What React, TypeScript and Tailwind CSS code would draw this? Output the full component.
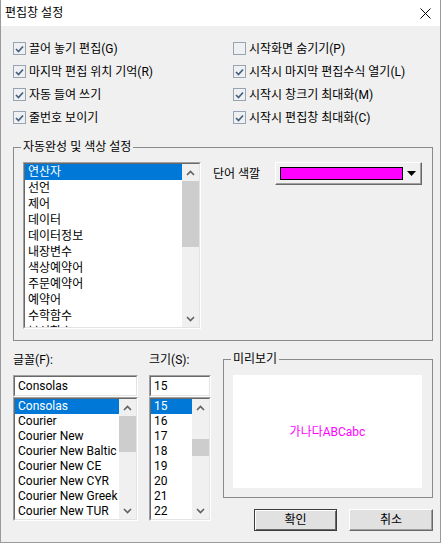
import React from "react";

const FONT = { fontFamily: 'Roboto, "Noto Sans CJK KR", sans-serif' };

const options: [string, boolean][] = [
  ["끌어 놓기 편집(G)", true],
  ["시작화면 숨기기(P)", false],
  ["마지막 편집 위치 기억(R)", true],
  ["시작시 마지막 편집수식 열기(L)", true],
  ["자동 들여 쓰기", true],
  ["시작시 창크기 최대화(M)", true],
  ["줄번호 보이기", true],
  ["시작시 편집창 최대화(C)", true],
];

const categories = [
  "연산자",
  "선언",
  "제어",
  "데이터",
  "데이터정보",
  "내장변수",
  "색상예약어",
  "주문예약어",
  "예약어",
  "수학함수",
  "분석함수",
];

const fonts = [
  "Consolas",
  "Courier",
  "Courier New",
  "Courier New Baltic",
  "Courier New CE",
  "Courier New CYR",
  "Courier New Greek",
  "Courier New TUR",
];

const sizes = ["15", "16", "17", "18", "19", "20", "21", "22"];

const CheckBox = ({ checked }: { checked: boolean }) => (
  <span className="w-[13px] h-[13px] border border-[#98a4b2] bg-[#eef0f3] flex items-center justify-center shrink-0">
    {checked && (
      <svg width="9" height="8" viewBox="0 0 9 8">
        <polyline points="1,4 3.5,6.5 8,1.5" fill="none" stroke="#46607f" strokeWidth="1.7" />
      </svg>
    )}
  </span>
);

const Chevron = ({ up }: { up?: boolean }) => (
  <svg width="9" height="6" viewBox="0 0 9 6">
    <polyline
      points={up ? "1,5 4.5,1.5 8,5" : "1,1 4.5,4.5 8,1"}
      fill="none"
      stroke="#606060"
      strokeWidth="1.6"
    />
  </svg>
);

const ScrollBar = ({ thumb }: { thumb: string }) => (
  <div className="w-[17px] h-full bg-[#f0f0f0] flex flex-col shrink-0">
    <div className="h-[17px] flex items-center justify-center shrink-0">
      <Chevron up />
    </div>
    <div className="flex-1">
      <div className={`bg-[#cdcdcd] ${thumb}`} />
    </div>
    <div className="h-[17px] flex items-center justify-center shrink-0">
      <Chevron />
    </div>
  </div>
);

// windows style sunken frame
const Sunken = ({ className, children }: { className: string; children: React.ReactNode }) => (
  <div className={`border border-t-[#a0a0a0] border-l-[#a0a0a0] border-r-white border-b-white ${className}`}>
    <div className="h-full border border-t-[#696969] border-l-[#696969] border-r-[#e3e3e3] border-b-[#e3e3e3] bg-white flex">
      {children}
    </div>
  </div>
);

const ListBox = ({
  items,
  className,
  rowClass,
  thumb,
}: {
  items: string[];
  className: string;
  rowClass: string;
  thumb: string;
}) => (
  <Sunken className={className}>
    <div className="flex-1 overflow-hidden">
      {items.map((t, i) => (
        <div
          key={t}
          className={`${rowClass} pl-[3px] whitespace-nowrap overflow-hidden ${
            i === 0 ? "bg-[#0078d7] text-white" : "text-black"
          }`}
        >
          {t}
        </div>
      ))}
    </div>
    <ScrollBar thumb={thumb} />
  </Sunken>
);

const Button = ({ label, primary }: { label: string; primary?: boolean }) => (
  <button
    className={`h-[22px] text-[12px] leading-[16px] bg-[#e1e1e1] ${
      primary
        ? "w-[83px] border border-[#3c3c3c] shadow-[inset_1px_1px_0_#ffffff,inset_-1px_-1px_0_#696969]"
        : "w-[84px] border border-t-white border-l-white border-r-[#696969] border-b-[#696969] shadow-[inset_-1px_-1px_0_#a0a0a0]"
    }`}
  >
    {label}
  </button>
);

export default function App() {
  return (
    <div
      className="w-[441px] h-[543px] bg-[#f0f0f0] border-x border-b border-[#9a9a9a] flex flex-col text-[12px] text-black"
      style={FONT}
    >
      <div className="h-[26px] bg-white flex items-center justify-between pl-[4px] pr-[9px] shrink-0">
        <span className="leading-[16px]">편집창 설정</span>
        <svg width="11" height="11" viewBox="0 0 11 11">
          <path d="M0.5 0.5 L10.5 10.5 M10.5 0.5 L0.5 10.5" stroke="#000" strokeWidth="1" />
        </svg>
      </div>

      <div className="grid grid-cols-[220px_200px] pl-[12px] pt-[11px]">
        {options.map(([label, checked]) => (
          <label key={label} className="h-[23px] flex items-center gap-[3px] leading-[16px]">
            <CheckBox checked={checked} />
            <span>{label}</span>
          </label>
        ))}
      </div>

      <fieldset className="ml-[12px] mt-[10px] w-[420px] border border-[#8a8a8a] pl-[9px] pt-[7px] pb-[11px] flex">
        <legend className="ml-[-2px] px-[2px] leading-[16px]">자동완성 및 색상 설정</legend>
        <ListBox
          items={categories}
          className="w-[178px] h-[167px]"
          rowClass="h-[16px] leading-[16px]"
          thumb="h-[66px]"
        />
        <div className="ml-[12px] h-[23px] flex items-center leading-[16px] w-[62px]">단어 색깔</div>
        <div className="w-[147px] h-[23px] bg-[#f0f0f0] border border-t-white border-l-white border-r-[#696969] border-b-[#696969] shadow-[inset_-1px_-1px_0_#a0a0a0] flex items-center pl-[4px] pr-[5px] gap-[4px]">
          <div className="flex-1 h-[13px] bg-[#ff00ff] border border-black" />
          <svg width="9" height="5" viewBox="0 0 9 5">
            <polygon points="0,0 9,0 4.5,5" fill="#000" />
          </svg>
        </div>
      </fieldset>

      <div className="flex pl-[12px] mt-[10px]">
        <div className="w-[125px] flex flex-col">
          <div className="h-[16px] leading-[16px] mt-[1px] mb-[7px]">글꼴(F):</div>
          <Sunken className="h-[22px]">
            <div className="pl-[3px] leading-[18px]">Consolas</div>
          </Sunken>
          <ListBox
            items={fonts}
            className="h-[124px]"
            rowClass="h-[15px] leading-[15px]"
            thumb="h-[36px]"
          />
        </div>

        <div className="w-[62px] ml-[11px] flex flex-col">
          <div className="h-[16px] leading-[16px] mt-[1px] mb-[7px]">크기(S):</div>
          <Sunken className="h-[22px]">
            <div className="pl-[3px] leading-[18px]">15</div>
          </Sunken>
          <ListBox
            items={sizes}
            className="h-[124px]"
            rowClass="h-[15px] leading-[15px]"
            thumb="mt-[23px] h-[17px]"
          />
        </div>

        <div className="w-[210px] ml-[12px] flex flex-col">
          <fieldset className="border border-[#8a8a8a] pl-[9px] pr-[10px] pt-[8px] pb-[9px]">
            <legend className="ml-[-2px] px-[2px] leading-[16px]">미리보기</legend>
            <div className="h-[113px] bg-white flex items-center justify-center text-[#ff00ff] text-[12px]">
              가나다ABCabc
            </div>
          </fieldset>
          <div className="flex justify-end gap-[12px] mt-[11px]">
            <Button label="확인" primary />
            <Button label="취소" />
          </div>
        </div>
      </div>
    </div>
  );
}
